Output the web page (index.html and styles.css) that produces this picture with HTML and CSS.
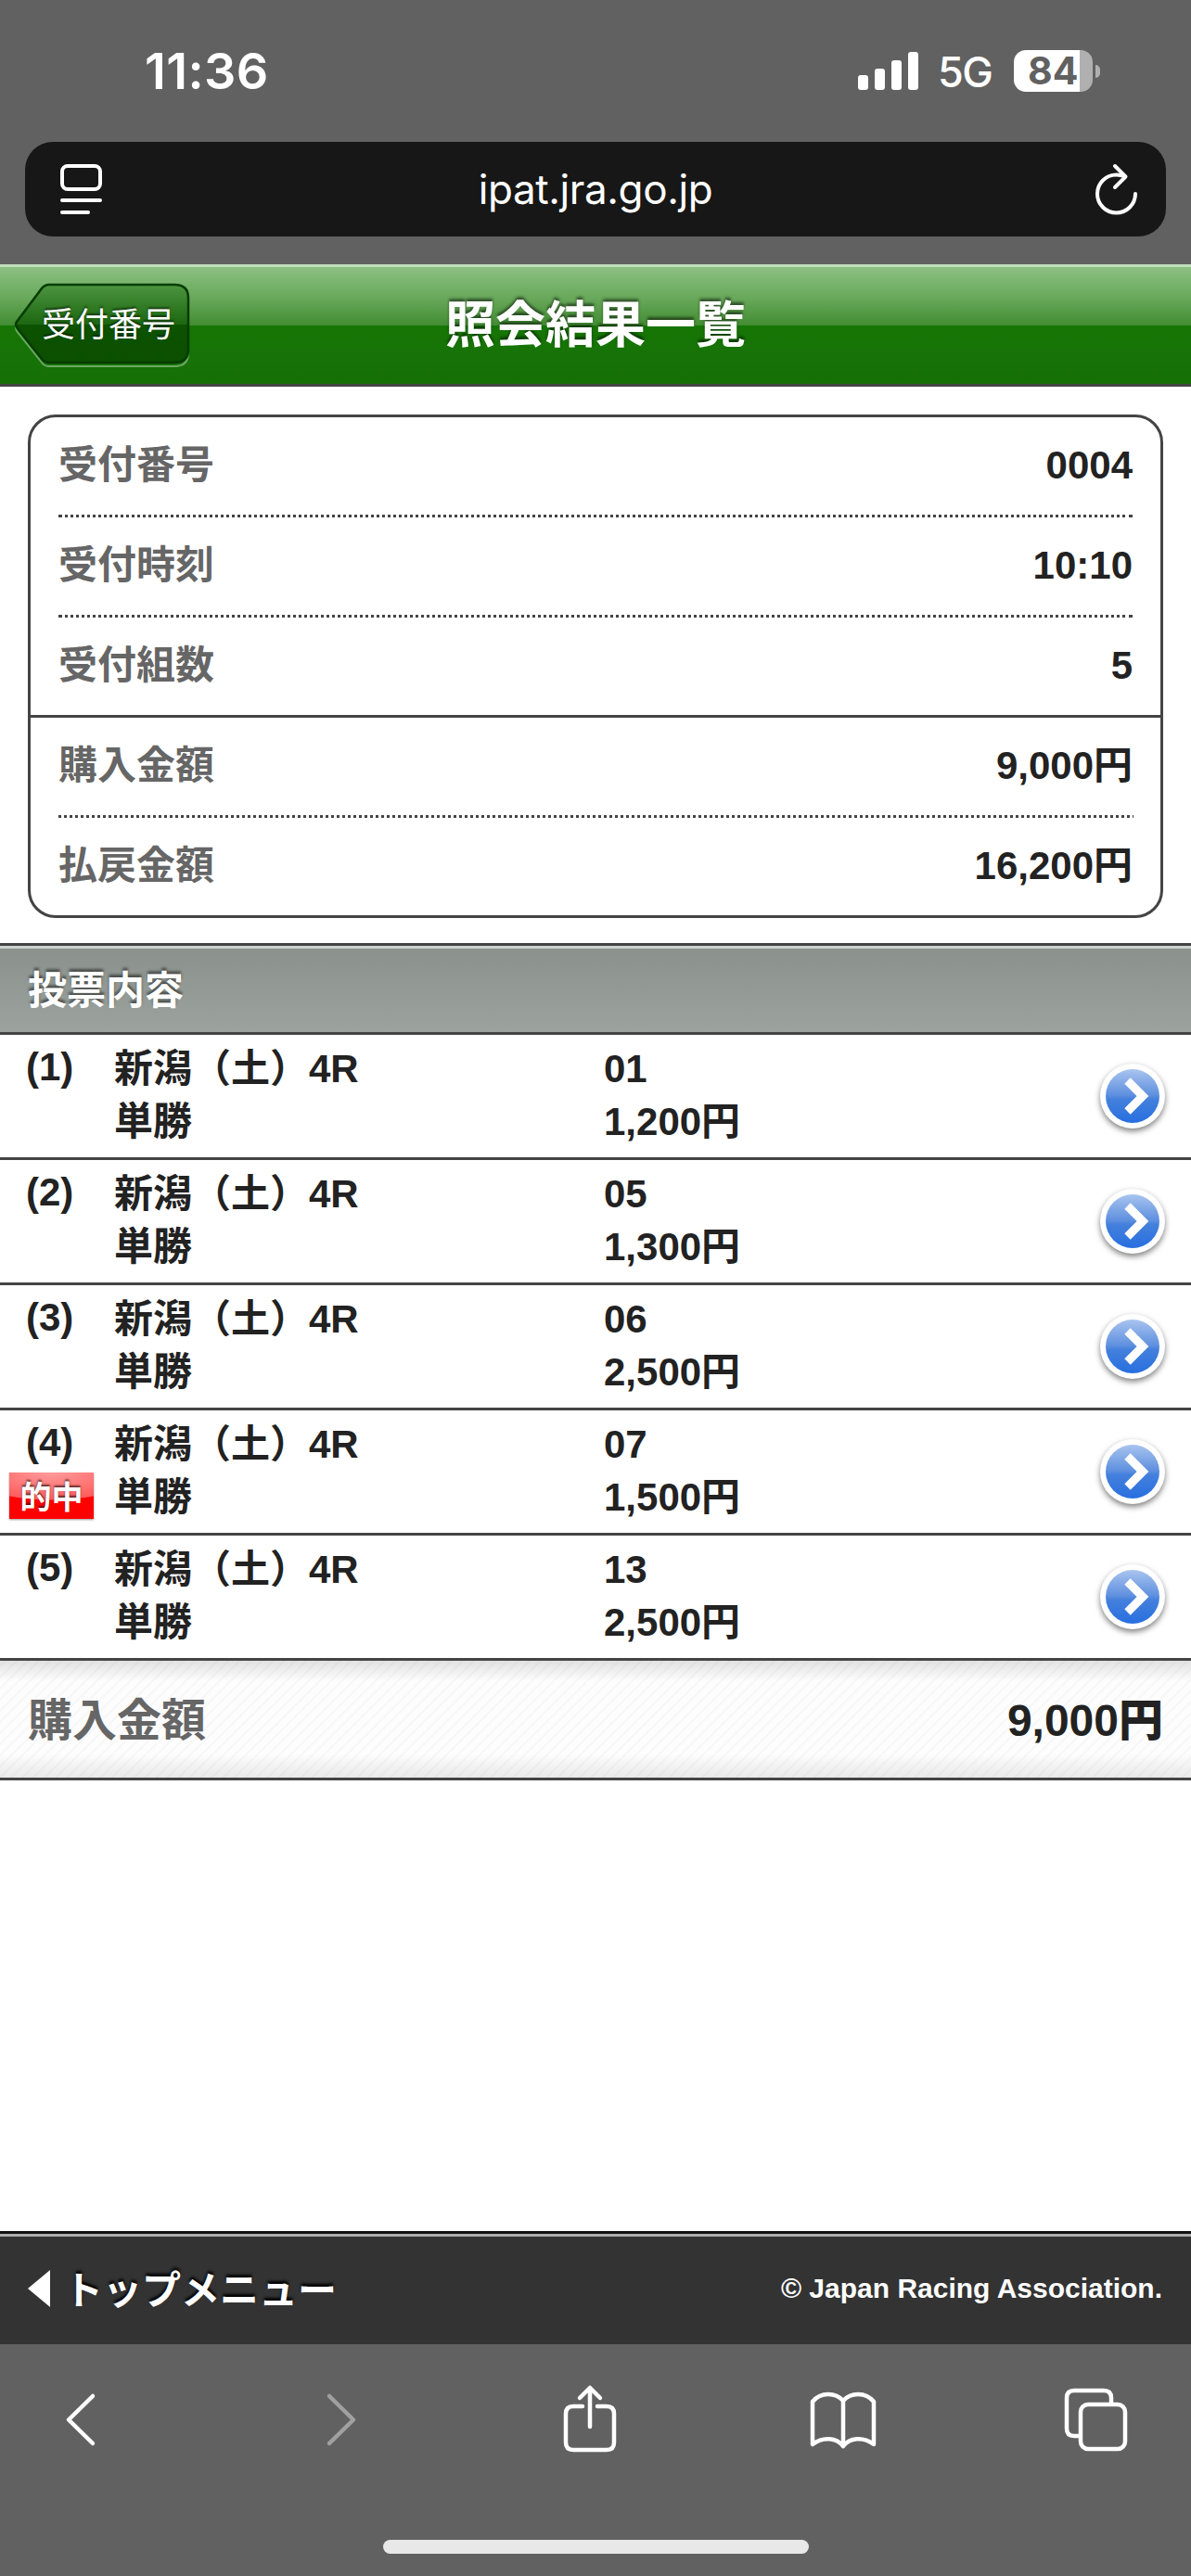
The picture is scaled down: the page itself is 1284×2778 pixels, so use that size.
FILE: index.html
```html
<!DOCTYPE html>
<html lang="ja">
<head>
  <meta charset="utf-8">
  <title>照会結果一覧</title>
  <link rel="stylesheet" href="styles.css">
</head>
<body>
  <div class="browser-top">
    <div class="status">
      <span class="clock">11:36</span>
      <div class="signal"><i></i><i></i><i></i><i></i></div>
      <span class="network">5G</span>
      <div class="battery"><span>84</span></div>
      <i class="battery-tip"></i>
    </div>
    <div class="address">
      <svg width="45" height="54" viewBox="0 0 45 54" fill="none" stroke="#fff" stroke-width="4" stroke-linecap="round">
        <rect x="2" y="2" width="41" height="25" rx="6"/>
        <path d="M2 39H43M2 52H30"/>
      </svg>
      <span class="url">ipat.jra.go.jp</span>
      <svg width="46" height="56" viewBox="0 0 46 56" fill="none" stroke="#fff" stroke-width="4" stroke-linecap="round" stroke-linejoin="round">
        <path d="M33 14.500Q28 12.500 23.500 12.500A20.500 20.500 0 1 0 44 33"/>
        <path d="M22 3L33.500 14.500L22 26"/>
      </svg>
    </div>
  </div>

  <header class="header">
    <a class="back" href="#">
      <svg width="190" height="92" viewBox="0 0 190 92">
        <defs>
          <linearGradient id="back" x1="0" y1="0" x2="0" y2="1">
            <stop offset="0" stop-color="#4d9440"/>
            <stop offset=".51" stop-color="#1c6710"/>
            <stop offset=".51" stop-color="#0c5200"/>
            <stop offset="1" stop-color="#0b4f00"/>
          </linearGradient>
        </defs>
        <path d="M38 5H173Q188 5 188 19V76Q188 90 173 90H38Q33 90 30 86L3 52Q1 48 3 44L30 9Q33 5 38 5Z" fill="none" stroke="#6ea864" stroke-width="2"/>
        <path d="M38 2H173Q188 2 188 16V72Q188 86 173 86H38Q33 86 30 82L3 48Q1 45 3 42L30 6Q33 2 38 2Z" fill="url(#back)" stroke="#063c00" stroke-width="2.5"/>
      </svg>
      <span>受付番号</span>
    </a>
    <h1>照会結果一覧</h1>
  </header>

  <main class="content">
    <dl class="summary">
      <div class="line"><dt>受付番号</dt><dd>0004</dd></div>
      <div class="line"><dt>受付時刻</dt><dd>10:10</dd></div>
      <div class="line"><dt>受付組数</dt><dd>5</dd></div>
      <div class="line money"><dt>購入金額</dt><dd>9,000円</dd></div>
      <div class="line"><dt>払戻金額</dt><dd>16,200円</dd></div>
    </dl>

    <h2>投票内容</h2>
    <ul class="bets">
      <li>
        <div class="no">(1)</div>
        <div class="race">新潟（土）4R<br>単勝</div>
        <div class="amount">01<br>1,200円</div>
        <svg class="go" viewBox="0 0 80 80"><use href="#go"/></svg>
      </li>
      <li>
        <div class="no">(2)</div>
        <div class="race">新潟（土）4R<br>単勝</div>
        <div class="amount">05<br>1,300円</div>
        <svg class="go" viewBox="0 0 80 80"><use href="#go"/></svg>
      </li>
      <li>
        <div class="no">(3)</div>
        <div class="race">新潟（土）4R<br>単勝</div>
        <div class="amount">06<br>2,500円</div>
        <svg class="go" viewBox="0 0 80 80"><use href="#go"/></svg>
      </li>
      <li>
        <div class="no">(4)<span class="hit">的中</span></div>
        <div class="race">新潟（土）4R<br>単勝</div>
        <div class="amount">07<br>1,500円</div>
        <svg class="go" viewBox="0 0 80 80"><use href="#go"/></svg>
      </li>
      <li>
        <div class="no">(5)</div>
        <div class="race">新潟（土）4R<br>単勝</div>
        <div class="amount">13<br>2,500円</div>
        <svg class="go" viewBox="0 0 80 80"><use href="#go"/></svg>
      </li>
    </ul>
    <div class="total"><span>購入金額</span><strong>9,000円</strong></div>
  </main>

  <footer class="footer">
    <a href="#"><i class="triangle"></i><span>トップメニュー</span></a>
    <small>© Japan Racing Association.</small>
  </footer>

  <nav class="toolbar">
    <div class="tools">
      <svg width="72" height="76" viewBox="0 0 72 76"><path d="M36 13L10 38.500L36 64"/></svg>
      <svg class="off" width="72" height="76" viewBox="0 0 72 76"><path d="M20 13L46 38.500L20 64"/></svg>
      <svg width="72" height="76" viewBox="0 0 72 76"><path d="M23 24H13Q5 24 5 32V63Q5 71 13 71H49Q57 71 57 63V32Q57 24 49 24H39M31 46V4M20 15L31 4L42 15"/></svg>
      <svg width="72" height="76" viewBox="0 0 72 76"><path d="M33 67C26 58 12 56 0 65V19C9 8 25 9 33 18C41 9 57 8 66 19V65C54 56 40 58 33 67V18"/></svg>
      <svg width="72" height="76" viewBox="0 0 72 76"><rect x="19" y="22" width="48" height="48" rx="8"/><path d="M18 56H12Q4 56 4 48V15Q4 7 12 7H44Q52 7 52 15V21"/></svg>
    </div>
    <div class="home"></div>
  </nav>

  <!-- shared round arrow button -->
  <svg width="0" height="0" class="defs">
    <defs>
      <linearGradient id="blue" x1="0" y1="0" x2="0" y2="1">
        <stop offset="0" stop-color="#a9c4ef"/>
        <stop offset=".48" stop-color="#5f90df"/>
        <stop offset=".56" stop-color="#4480dc"/>
        <stop offset="1" stop-color="#276fe0"/>
      </linearGradient>
      <g id="go">
        <circle cx="40" cy="39" r="35" fill="#fff"/>
        <circle cx="40" cy="39" r="29" fill="url(#blue)"/>
        <path d="M34.500 22.500L51 39L34.500 55.500" fill="none" stroke="#fff" stroke-width="9"/>
      </g>
    </defs>
  </svg>
</body>
</html>
```
FILE: styles.css
```css
* {
  box-sizing: border-box;
  margin: 0;
  padding: 0;
}

body {
  display: flex;
  flex-direction: column;
  height: 2778px;
  background-color: #fff;
  color: #222;
  font-family: "Liberation Sans", "Noto Sans CJK JP", sans-serif;
  font-size: 42px;
  font-weight: bold;
}

a {
  color: #fff;
  text-decoration: none;
}

svg {
  display: block;
  flex: none;
}

.defs {
  position: absolute;
}

/* browser chrome */
.browser-top {
  height: 285px;
  background-color: #616161;
  color: #fff;
  font-family: Inter, sans-serif;
}

.status {
  display: flex;
  align-items: center;
  height: 153px;
  padding: 0 98px 0 156px;
}

.clock {
  flex: 1;
  font-size: 54px;
  font-weight: 600;
  letter-spacing: 0.4px;
}

.signal {
  display: flex;
  align-items: flex-end;
  gap: 7px;
  height: 41px;
  margin-right: 21px;
}

.signal i {
  width: 11px;
  height: 16px;
  border-radius: 3px;
  background-color: #fff;
}

.signal i:nth-child(2) {
  height: 23px;
}

.signal i:nth-child(3) {
  height: 32px;
}

.signal i:nth-child(4) {
  height: 41px;
}

.network {
  width: 82px;
  padding-top: 2px;
  font-size: 45px;
  font-weight: 500;
  letter-spacing: -1.5px;
}

.battery {
  width: 85px;
  height: 45px;
  border-radius: 13px;
  background: linear-gradient(to right, #fff 71px, #b0b0b0 71px);
  color: #616161;
  font-size: 41px;
  font-weight: 700;
  line-height: 44px;
  padding-left: 15px;
}

.battery-tip {
  width: 5px;
  height: 14px;
  margin-left: 3px;
  border-radius: 0 5px 5px 0;
  background-color: #b0b0b0;
}

.address {
  display: flex;
  align-items: center;
  justify-content: space-between;
  height: 102px;
  margin: 0 27px;
  padding: 0 31px 0 38px;
  border-radius: 30px;
  background-color: #171717;
}

.url {
  padding-right: 6px;
  font-size: 44px;
  font-weight: 400;
  letter-spacing: -0.4px;
}

/* page header */
.header {
  position: relative;
  height: 132px;
  border-top: 3px solid #bfdfba;
  border-bottom: 3px solid #444;
  background: linear-gradient(#8cc083, #6aaa5d 25%, #438d33 50%, #167604 50%, #177208 80%, #156f04);
}

.header h1 {
  color: #fff;
  font-size: 54px;
  line-height: 126px;
  text-align: center;
  text-shadow: 0 -3px 3px rgba(0, 0, 0, 0.5);
}

.back {
  position: absolute;
  left: 15px;
  top: 17px;
  font-size: 36px;
  font-weight: normal;
}

.back span {
  position: absolute;
  left: 30px;
  top: 0;
  line-height: 91px;
  white-space: nowrap;
  text-shadow: 0 -2px 2px rgba(0, 0, 0, 0.5);
}

.content {
  flex: 1;
}

/* receipt summary */
.summary {
  margin: 30px 30px 27px;
  border: 3px solid #444;
  border-radius: 30px;
}

.line {
  display: flex;
  justify-content: space-between;
  height: 108px;
  margin: 0 30px;
  border-bottom: 3px dotted #444;
  line-height: 104px;
}

.line:nth-child(3),
.line:last-child {
  border-bottom: none;
}

.line:nth-child(3) {
  height: 105px;
}

.line:last-child {
  height: 105px;
}

.line.money {
  height: 111px;
  margin: 0;
  padding: 0 30px;
  border-top: 3px solid #444;
  border-bottom: none;
  background: repeating-linear-gradient(to right, #444 0 3px, transparent 3px 6px) 30px 105px / 1159px 3px no-repeat;
}

.line dt {
  color: #666;
}

h2 {
  height: 99px;
  padding-left: 30px;
  border-top: 3px solid #444;
  border-bottom: 3px solid #444;
  box-shadow: inset 0 3px #ccd3d1;
  background: linear-gradient(#8a918c, #9ca39e);
  color: #fff;
  font-size: 42px;
  line-height: 98px;
  text-shadow: 0 -3px 3px rgba(0, 0, 0, 0.5);
}

/* bet list */
.bets {
  list-style: none;
}

.bets li {
  display: flex;
  height: 135px;
  padding: 8px 23px 0 28px;
  border-bottom: 3px solid #444;
  line-height: 57px;
}

.no {
  position: relative;
  top: -2px;
  width: 95px;
}

.hit {
  position: absolute;
  left: -18px;
  top: 61px;
  width: 91px;
  height: 50px;
  background: radial-gradient(ellipse 90px 30px at 50% 0, #ff9c9c, #ff5c5c 97%, transparent) #f00;
  box-shadow: 0 1px 2px rgba(0, 0, 0, 0.4);
  color: #fff;
  font-size: 34px;
  line-height: 54px;
  text-align: center;
  text-shadow: 0 -2px 2px rgba(0, 0, 0, 0.6);
}

.race {
  width: 528px;
}

.amount {
  flex: 1;
}

.go {
  width: 80px;
  height: 80px;
  margin-top: 19px;
  filter: drop-shadow(0 3px 3px rgba(0, 0, 0, 0.5));
}

.total {
  display: flex;
  justify-content: space-between;
  height: 129px;
  padding: 0 30px;
  border-bottom: 3px solid #444;
  background:
    linear-gradient(rgba(0, 0, 0, 0.11), transparent 22px, transparent 100px, rgba(0, 0, 0, 0.08)),
    repeating-linear-gradient(-45deg, #fdfdfd 0 5px, #f6f6f6 7px, #fdfdfd 8.5px);
  font-size: 48px;
  line-height: 129px;
}

.total span {
  color: #666;
}

/* page footer */
.footer {
  display: flex;
  align-items: center;
  justify-content: space-between;
  height: 122px;
  padding: 0 31px 0 30px;
  border-top: 3px solid #111;
  box-shadow: inset 0 3px #b0aeaf;
  background-color: #333;
  color: #fff;
}

.footer a {
  display: flex;
  align-items: center;
  text-shadow: 0 -3px 3px #000;
}

.footer a span {
  padding-bottom: 5px;
}

.triangle {
  margin: 0 15px 2px 0;
  border: 20px solid transparent;
  border-right: 24px solid #fff;
  border-left: none;
}

.footer small {
  padding-bottom: 2px;
  font-size: 30px;
}

.toolbar {
  height: 250px;
  background-color: #616161;
}

.tools {
  display: flex;
  justify-content: space-between;
  padding: 43px 66px 0 64px;
  fill: none;
  stroke: #fff;
  stroke-width: 4.5;
  stroke-linecap: round;
  stroke-linejoin: round;
}

.tools svg {
  overflow: visible;
}

.off {
  opacity: 0.4;
}

.home {
  width: 459px;
  height: 15px;
  margin: 92px auto 0;
  border-radius: 8px;
  background-color: #e8e8e8;
}
```
